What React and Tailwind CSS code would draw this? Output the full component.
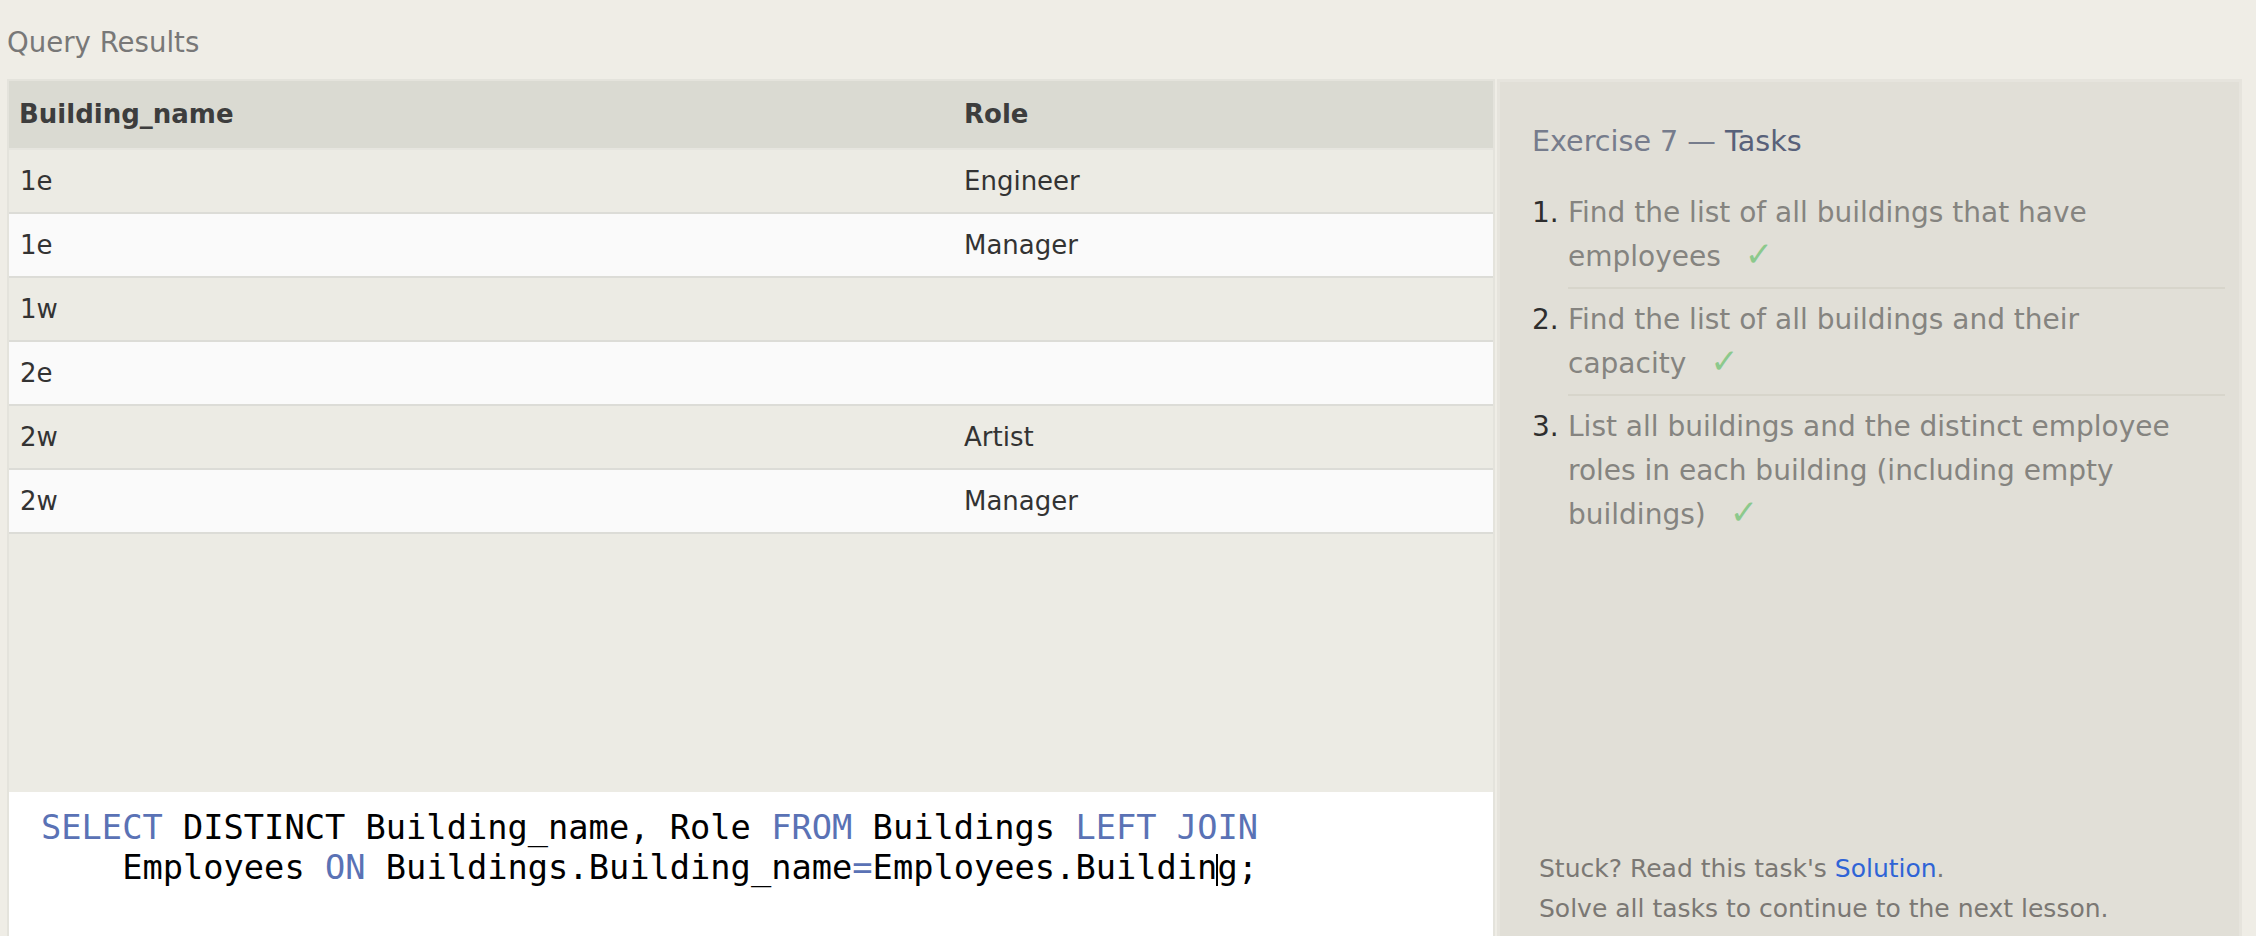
import React from "react";

const rows = [
  ["1e", "Engineer", "odd"],
  ["1e", "Manager", "even"],
  ["1w", "", "odd"],
  ["2e", "", "even"],
  ["2w", "Artist", "odd"],
  ["2w", "Manager", "even"],
];

function Check() {
  return <span className="ml-[24px] text-[#8cc98c] text-[34px] leading-none">✓</span>;
}

export default function App() {
  return (
    <div className="w-[2256px] h-[936px] overflow-hidden bg-[#efede6] flex flex-col font-['DejaVu_Sans',sans-serif]">
      <div className="h-[79px] shrink-0 pt-[6px] pl-[7px] flex items-center text-[27.6px] text-[#787878]">
        Query Results
      </div>
      <div className="flex flex-1 min-h-0">
        {/* Left: results table + editor */}
        <div className="ml-[7px] w-[1488px] flex flex-col border-t-2 border-x-2 border-[#e4e3dc]">
          <div className="h-[69px] shrink-0 grid grid-cols-[944px_1fr] items-center bg-[#dadad2] border-b-2 border-[#e6e5df] text-[26px] font-bold text-[#3d3d3d]">
            <div className="pl-[10px]">Building_name</div>
            <div className="pl-[11px]">Role</div>
          </div>
          {rows.map((r, i) => (
            <div
              key={i}
              className={
                "h-[64px] shrink-0 grid grid-cols-[944px_1fr] items-center border-b-2 border-[#dcdcd7] text-[26px] text-[#333333] " +
                (r[2] === "odd" ? "bg-[#ecebe4]" : "bg-[#fafafa]")
              }
            >
              <div className="pl-[11px]">{r[0]}</div>
              <div className="pl-[11px]">{r[1]}</div>
            </div>
          ))}
          <div className="flex-1 bg-[#ecebe4]" />
          <div className="h-[144px] shrink-0 bg-white pt-[16px] pl-[32px] font-['DejaVu_Sans_Mono',monospace] text-[33.7px] leading-[40px] text-black whitespace-pre">
            <div>
              <span className="text-[#5a72b5]">SELECT</span> DISTINCT Building_name, Role{" "}
              <span className="text-[#5a72b5]">FROM</span> Buildings{" "}
              <span className="text-[#5a72b5]">LEFT JOIN</span>
            </div>
            <div>
              {"    "}Employees <span className="text-[#5a72b5]">ON</span> Buildings.Building_name
              <span className="text-[#5a72b5]">=</span>Employees.Buildin
              <span className="inline-block w-[2px] h-[32px] -mx-[1px] bg-black align-[-7px]" />
              g;
            </div>
          </div>
        </div>

        {/* Right: tasks panel */}
        <div className="ml-[2px] w-[745px] flex flex-col bg-[#e1dfd7] border-t-[3px] border-x-[3px] border-[#e6e4dd] pl-[32px] pr-[14px] pt-[39px] pb-[7px]">
          <div className="text-[28.6px] leading-[40px] text-[#767c8c]">
            Exercise 7 — <span className="text-[#58617a]">Tasks</span>
          </div>
          <ol className="mt-[21px] text-[28px] leading-[44px]">
            <li className="flex">
              <span className="w-[36px] shrink-0 pt-[9px] text-[#2e2e2e]">1.</span>
              <div className="flex-1 pt-[9px] pb-[8px] border-b-2 border-[#d7d5cb] text-[#858480]">
                Find the list of all buildings that have
                <br />
                employees<Check />
              </div>
            </li>
            <li className="flex">
              <span className="w-[36px] shrink-0 pt-[9px] text-[#2e2e2e]">2.</span>
              <div className="flex-1 pt-[9px] pb-[8px] border-b-2 border-[#d7d5cb] text-[#858480]">
                Find the list of all buildings and their
                <br />
                capacity<Check />
              </div>
            </li>
            <li className="flex">
              <span className="w-[36px] shrink-0 pt-[9px] text-[#2e2e2e]">3.</span>
              <div className="flex-1 pt-[9px] pb-[8px] text-[#858480]">
                List all buildings and the distinct employee
                <br />
                roles in each building (including empty
                <br />
                buildings)<Check />
              </div>
            </li>
          </ol>
          <div className="mt-auto pl-[7px] text-[25px] leading-[40px] text-[#7b7874]">
            <div>
              Stuck? Read this task's <span className="text-[#2f64d6]">Solution</span>.
            </div>
            <div>Solve all tasks to continue to the next lesson.</div>
          </div>
        </div>
      </div>
    </div>
  );
}
